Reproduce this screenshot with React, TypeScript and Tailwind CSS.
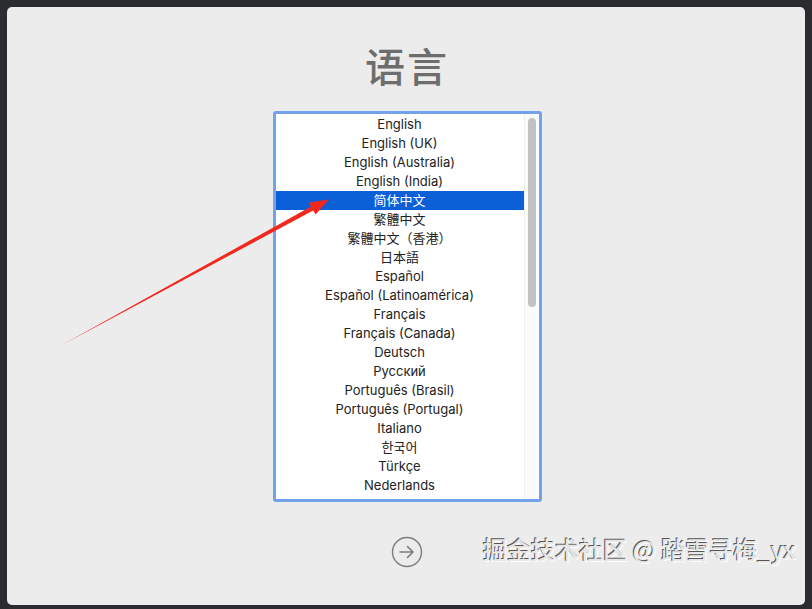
const LANGUAGES = [
  "English",
  "English (UK)",
  "English (Australia)",
  "English (India)",
  "简体中文",
  "繁體中文",
  "繁體中文（香港）",
  "日本語",
  "Español",
  "Español (Latinoamérica)",
  "Français",
  "Français (Canada)",
  "Deutsch",
  "Русский",
  "Português (Brasil)",
  "Português (Portugal)",
  "Italiano",
  "한국어",
  "Türkçe",
  "Nederlands",
];

const SELECTED = "简体中文";

const FONT =
  "font-['Inter','Liberation_Sans','Noto_Sans_CJK_SC','Noto_Sans_CJK_KR',sans-serif]";

const NextButton = () => (
  <button className="w-[32px] h-[32px] flex items-center justify-center">
    <svg width="32" height="32" viewBox="0 0 32 32" fill="none">
      <circle cx="16" cy="16" r="14.5" stroke="#7c7c7c" strokeWidth="1.4" />
      <path
        d="M9 16h13M16.5 10.5 22 16l-5.5 5.5"
        stroke="#7c7c7c"
        strokeWidth="1.6"
        strokeLinecap="round"
        strokeLinejoin="round"
      />
    </svg>
  </button>
);

const LanguageList = () => (
  <div className="w-[269px] h-[391px] rounded-[3px] border-[3px] border-[#72a2ea] bg-white flex overflow-hidden">
    <div className="flex-1 pt-[1px]">
      {LANGUAGES.map((lang) => (
        <div
          key={lang}
          className={
            lang === SELECTED
              ? "h-[19px] leading-[19px] text-center text-[13px] bg-[#0b5fd7] text-white"
              : "h-[19px] leading-[19px] text-center text-[13px] text-[#222]"
          }
        >
          {lang}
        </div>
      ))}
    </div>
    <div className="w-[15px] border-l border-[#efefef] bg-[#fbfbfb] pt-[4px] flex justify-center">
      <div className="w-[8px] h-[189px] rounded-full bg-[#c2c2c2]" />
    </div>
  </div>
);

const App = () => {
  return (
    <div className={`relative w-[812px] h-[609px] bg-[#2b2c30] p-[7px] overflow-hidden ${FONT}`}>
      <div className="w-full h-[598px] rounded-[5px] bg-[#ececec] flex flex-col items-center pt-[34px] pl-[2px]">
        <h1 className="h-[48px] leading-[48px] text-[40px] text-[#6d6d6d] font-['Noto_Sans_CJK_SC',sans-serif] font-medium tracking-[2px]">
          语言
        </h1>
        <div className="mt-[22px]">
          <LanguageList />
        </div>
        <div className="mt-[34px]">
          <NextButton />
        </div>
      </div>

      {/* annotation arrow */}
      <svg
        className="absolute left-0 top-0 pointer-events-none"
        width="812"
        height="609"
        viewBox="0 0 812 609"
      >
        <polygon
          points="62,345 313.2,210.6 315.6,214.5 329,199.5 308.8,202.5 311,206.4"
          fill="#f2281f"
        />
      </svg>

      {/* watermark */}
      <div className="absolute right-[16px] bottom-[45px] text-[24px] leading-[30px] text-[#e6e6e6] font-['Noto_Sans_CJK_SC',sans-serif] font-medium [text-shadow:-1px_-1px_0_#555,1px_1px_0_#fff]">
        掘金技术社区 @ 踏雪寻梅_yx
      </div>
    </div>
  );
};

export default App;
